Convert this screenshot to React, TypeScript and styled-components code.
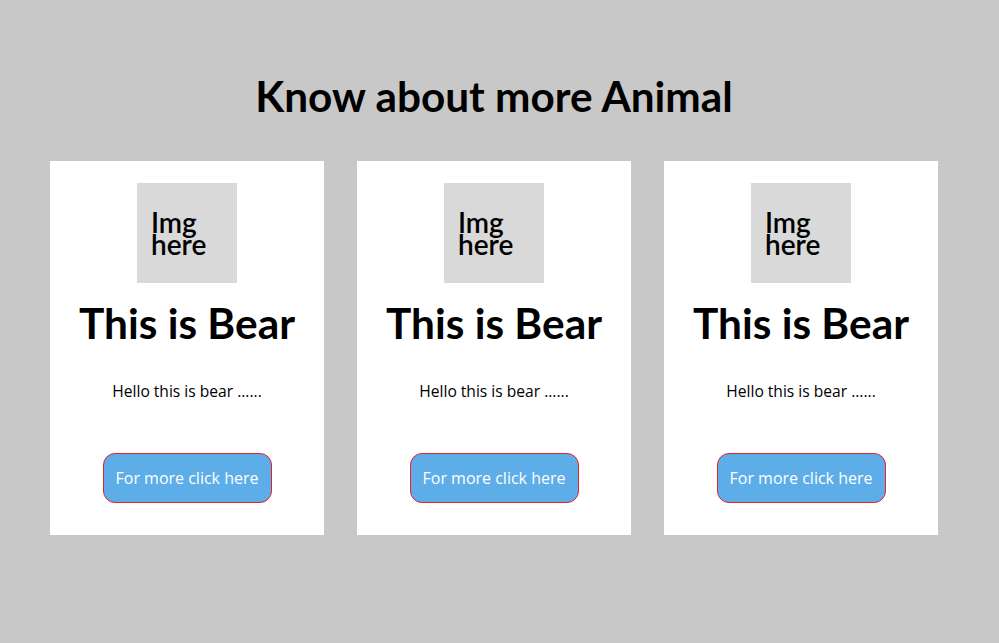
import React from "react";
import styled, { createGlobalStyle } from "styled-components";

const Global = createGlobalStyle`
  html, body { margin: 0; padding: 0; background: #c8c8c8; }
  body { font-family: "Open Sans", "Liberation Sans", sans-serif; color: #000; }
`;

const Page = styled.div`
  width: 999px;
  height: 643px;
  box-sizing: border-box;
  padding-top: 72px;
  display: flex;
  flex-direction: column;
  align-items: center;
`;

const Title = styled.h1`
  margin: 0;
  font-family: "Lato", sans-serif;
  font-size: 42.3px;
  font-weight: 700;
  line-height: 48px;
  margin-left: -11px;
`;

const Row = styled.div`
  display: flex;
  gap: 33px;
  margin-top: 41px;
  margin-left: -11px;
`;

const Card = styled.div`
  width: 274px;
  height: 374px;
  background: #fff;
  box-sizing: border-box;
  padding-top: 22px;
  display: flex;
  flex-direction: column;
  align-items: center;
`;

const ImgBox = styled.div`
  width: 100px;
  height: 100px;
  background: #d9d9d9;
  display: flex;
  flex-direction: column;
  justify-content: center;
  padding-left: 14px;
  box-sizing: border-box;
  font-family: "Lato", sans-serif;
  font-weight: 600;
  font-size: 28px;
`;

const ImgLine = styled.div`
  height: 22px;
  line-height: 22px;
`;

const CardTitle = styled.h2`
  margin: 16px 0 0;
  font-family: "Lato", sans-serif;
  font-size: 42.4px;
  font-weight: 700;
  line-height: 48px;
`;

const Text = styled.p`
  margin: 34px 0 0;
  font-size: 15.6px;
  line-height: 20px;
`;

const Button = styled.button`
  margin-top: 52px;
  width: 169px;
  height: 50px;
  border-radius: 12px;
  border: 1px solid #e8202a;
  background: #5dade9;
  color: #fff;
  font-family: "Open Sans", sans-serif;
  font-size: 16px;
  cursor: pointer;
`;

const cards = [1, 2, 3];

export default function App() {
  return (
    <>
      <Global />
      <Page>
        <Title>Know about more Animal</Title>
        <Row>
          {cards.map((c) => (
            <Card key={c}>
              <ImgBox>
                <ImgLine>Img</ImgLine>
                <ImgLine>here</ImgLine>
              </ImgBox>
              <CardTitle>This is Bear</CardTitle>
              <Text>Hello this is bear ......</Text>
              <Button>For more click here</Button>
            </Card>
          ))}
        </Row>
      </Page>
    </>
  );
}
